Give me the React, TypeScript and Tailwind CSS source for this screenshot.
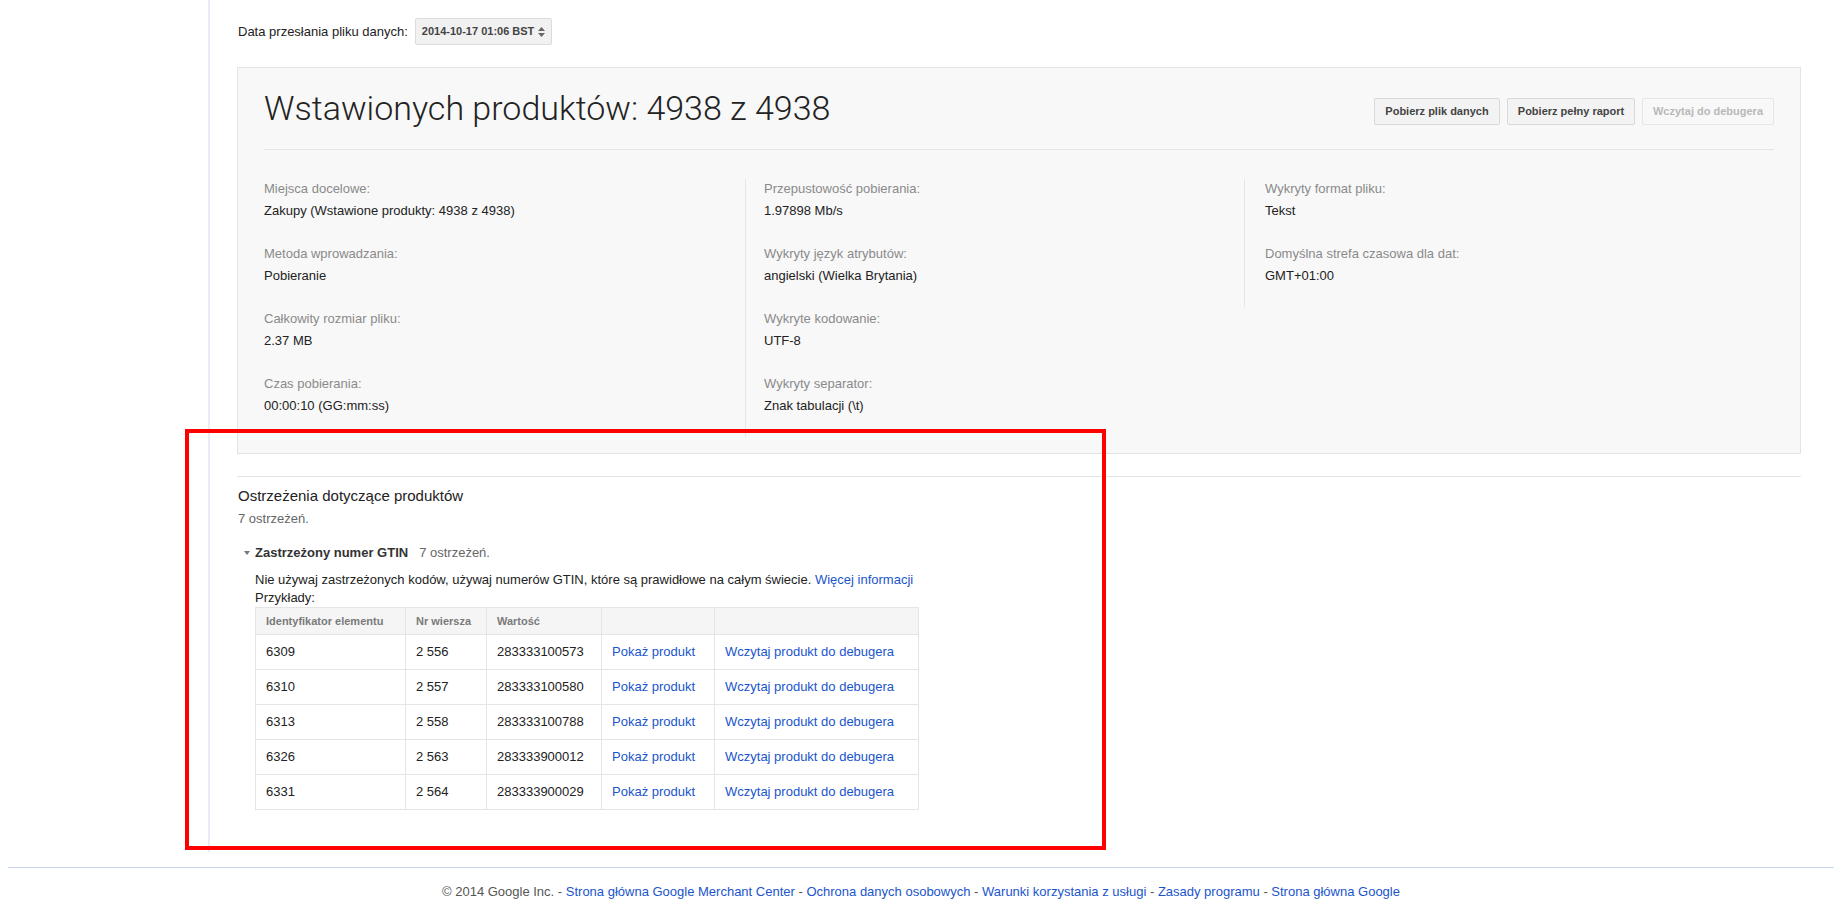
const details = [
  [
    ['Miejsca docelowe:', 'Zakupy (Wstawione produkty: 4938 z 4938)'],
    ['Metoda wprowadzania:', 'Pobieranie'],
    ['Całkowity rozmiar pliku:', '2.37 MB'],
    ['Czas pobierania:', '00:00:10 (GG:mm:ss)'],
  ],
  [
    ['Przepustowość pobierania:', '1.97898 Mb/s'],
    ['Wykryty język atrybutów:', 'angielski (Wielka Brytania)'],
    ['Wykryte kodowanie:', 'UTF-8'],
    ['Wykryty separator:', 'Znak tabulacji (\\t)'],
  ],
  [
    ['Wykryty format pliku:', 'Tekst'],
    ['Domyślna strefa czasowa dla dat:', 'GMT+01:00'],
  ],
];

const rows = [
  ['6309', '2 556', '283333100573'],
  ['6310', '2 557', '283333100580'],
  ['6313', '2 558', '283333100788'],
  ['6326', '2 563', '283333900012'],
  ['6331', '2 564', '283333900029'],
];

function DetailColumn({ items, className }: { items: string[][]; className: string }) {
  return (
    <div className={className}>
      {items.map(([label, value]) => (
        <div key={label}>
          <div className="leading-[16px] text-[#8a8a8a]">{label}</div>
          <div className="mt-[6px] leading-[16px] text-[#222]">{value}</div>
        </div>
      ))}
    </div>
  );
}

export default function App() {
  return (
    <div className="relative min-h-[922px] bg-white font-['Liberation_Sans',Arial,sans-serif] text-[13px] text-[#222]">
      <div className="flex">
        <div className="w-[210px] shrink-0 border-r-2 border-[#e9ecf5]" />
        <main className="flex-1 pl-[27px] pr-[41px] pt-[18px] pb-[42px]">
          {/* upload date picker */}
          <div className="flex h-[27px] items-center">
            <span className="pl-[1px] text-[#222]">Data przesłania pliku danych:</span>
            <div className="ml-[7px] flex h-[27px] w-[137px] items-center justify-between rounded-[2px] border border-[#dcdcdc] bg-[#f1f1f1] pl-[6px] pr-[6px] text-[11px] font-bold text-[#444]">
              <span>2014-10-17 01:06 BST</span>
              <svg width="7" height="10" viewBox="0 0 7 10" className="text-[#666]">
                <path d="M3.5 0 L7 4 L0 4 Z" fill="currentColor" />
                <path d="M0 6 L7 6 L3.5 10 Z" fill="currentColor" />
              </svg>
            </div>
          </div>

          {/* summary box */}
          <div className="mt-[22px] border border-[#e3e3e3] bg-[#f8f8f8] px-[26px] pt-[19px] pb-[16px]">
            <div className="flex items-start justify-between border-b border-[#e5e5e5] pb-[20px]">
              <h1 className="font-['Roboto',sans-serif] text-[34px] font-light leading-[42px] text-[#222]">
                Wstawionych produktów: 4938 z 4938
              </h1>
              <div className="mt-[11px] flex gap-[7px] text-[11px] font-bold">
                <button className="h-[27px] w-[126px] rounded-[2px] border border-[#d9d9d9] bg-[#f3f3f3] text-[#444]">
                  Pobierz plik danych
                </button>
                <button className="h-[27px] w-[128px] rounded-[2px] border border-[#d9d9d9] bg-[#f3f3f3] text-[#444]">
                  Pobierz pełny raport
                </button>
                <button className="h-[27px] w-[132px] rounded-[2px] border border-[#e6e6e6] bg-[#f8f8f8] text-[#b8b8b8]">
                  Wczytaj do debugera
                </button>
              </div>
            </div>
            <div className="mt-[29px] grid grid-cols-[481px_499px_1fr] items-start">
              <DetailColumn items={details[0]} className="flex flex-col gap-[27px] pt-[2px] pb-[23px]" />
              <DetailColumn
                items={details[1]}
                className="flex flex-col gap-[27px] border-l border-[#e6e6e6] pl-[18px] pt-[2px] pb-[23px]"
              />
              <DetailColumn
                items={details[2]}
                className="flex flex-col gap-[27px] border-l border-[#e6e6e6] pl-[20px] pt-[2px] pb-[23px]"
              />
            </div>
          </div>

          {/* warnings */}
          <div className="mt-[22px] border-t border-[#e5e5e5] pl-[1px]">
            <h2 className="mt-[10px] text-[15px] leading-[18px] text-[#222]">Ostrzeżenia dotyczące produktów</h2>
            <div className="mt-[6px] leading-[16px] text-[#666]">7 ostrzeżeń.</div>
            <div className="mt-[18px] flex items-center pl-[6px] leading-[16px]">
              <svg width="6" height="4" viewBox="0 0 6 4" className="text-[#777]">
                <path d="M0 0 L6 0 L3 4 Z" fill="currentColor" />
              </svg>
              <span className="ml-[5px] font-bold text-[#333]">Zastrzeżony numer GTIN</span>
              <span className="ml-[11px] text-[#666]">7 ostrzeżeń.</span>
            </div>
            <div className="mt-[10px] pl-[17px] leading-[18px]">
              <div>
                Nie używaj zastrzeżonych kodów, używaj numerów GTIN, które są prawidłowe na całym świecie.{' '}
                <a className="text-[#1a55cc]">Więcej informacji</a>
              </div>
              <div>Przykłady:</div>
              <table className="w-[664px] table-fixed border-collapse border border-[#e5e5e5] text-left">
                <thead>
                  <tr className="h-[27px] bg-[#f5f5f5] text-[11px] font-bold text-[#7a7a7a]">
                    <th className="w-[150px] border border-[#e5e5e5] px-[10px] font-bold">Identyfikator elementu</th>
                    <th className="w-[81px] border border-[#e5e5e5] px-[10px] font-bold">Nr wiersza</th>
                    <th className="w-[115px] border border-[#e5e5e5] px-[10px] font-bold">Wartość</th>
                    <th className="w-[113px] border border-[#e5e5e5] px-[10px]" />
                    <th className="border border-[#e5e5e5] px-[10px]" />
                  </tr>
                </thead>
                <tbody>
                  {rows.map(([id, line, value]) => (
                    <tr key={id} className="h-[35px]">
                      <td className="border border-[#e5e5e5] px-[10px]">{id}</td>
                      <td className="border border-[#e5e5e5] px-[10px]">{line}</td>
                      <td className="border border-[#e5e5e5] px-[10px]">{value}</td>
                      <td className="border border-[#e5e5e5] px-[10px] text-[#1a55cc]">Pokaż produkt</td>
                      <td className="border border-[#e5e5e5] px-[10px] text-[#1a55cc]">Wczytaj produkt do debugera</td>
                    </tr>
                  ))}
                </tbody>
              </table>
            </div>
          </div>
        </main>
      </div>

      <footer className="mx-[8px] mt-[15px] border-t border-[#c9d7f1] pt-[16px] text-center leading-[16px] text-[#555]">
        © 2014 Google Inc. - <a className="text-[#1a55cc]">Strona główna Google Merchant Center</a> -{' '}
        <a className="text-[#1a55cc]">Ochrona danych osobowych</a> -{' '}
        <a className="text-[#1a55cc]">Warunki korzystania z usługi</a> -{' '}
        <a className="text-[#1a55cc]">Zasady programu</a> - <a className="text-[#1a55cc]">Strona główna Google</a>
      </footer>

      {/* annotation frame */}
      <div className="pointer-events-none absolute left-[185px] top-[429px] h-[421px] w-[921px] border-4 border-[#ff0000]" />
    </div>
  );
}
